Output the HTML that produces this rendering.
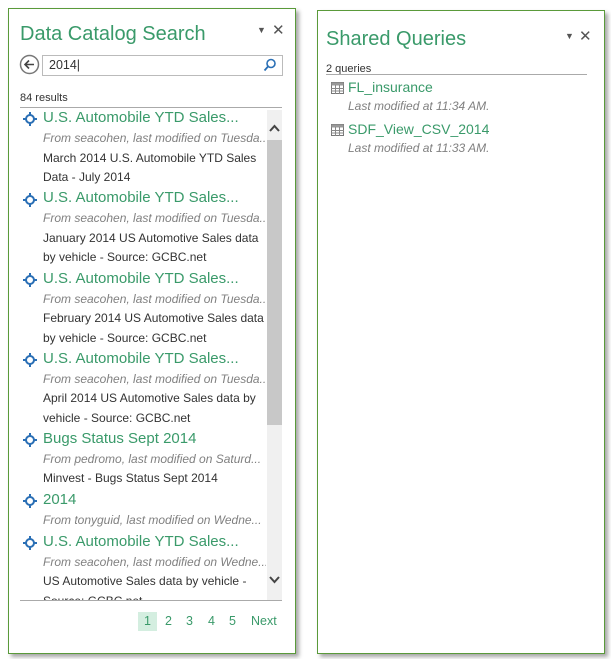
<!DOCTYPE html>
<html><head><meta charset="utf-8"><style>
body{margin:0;width:611px;height:659px;background:#fff;position:relative;overflow:hidden;font-family:"Liberation Sans",sans-serif}
.p{position:absolute;border:1px solid #5a9a3a;box-shadow:3px 3px 4px rgba(0,0,0,.35);background:#fff}
.a{position:absolute;white-space:nowrap}
.t{color:#3a9a6a}
.h{font-size:20px;color:#3a9a6a}
.it{font-style:italic;color:#808080;font-size:12px;margin-top:0px}
.d{color:#333;font-size:12px}
.ti{font-size:15px;color:#3a9a6a;margin-top:-1px}
</style></head><body>
<div class="p" style="left:8px;top:8px;width:286px;height:644px"></div>
<div class="p" style="left:317px;top:10px;width:286px;height:642px"></div>

<div class="a h" style="left:20px;top:23px">Data Catalog Search</div>
<div class="a" style="left:257px;top:25px;font-size:9px;color:#555">▼</div>
<div class="a" style="left:272px;top:21px;font-size:15px;color:#555">✕</div>
<svg class="a" style="left:19px;top:54px" width="21" height="21"><circle cx="10.5" cy="10.5" r="9" fill="none" stroke="#777" stroke-width="1.5"/><path d="M15 10.5H6.5M10 6.5l-4 4 4 4" fill="none" stroke="#444" stroke-width="1.6"/></svg>
<div class="a" style="left:42px;top:55px;width:239px;height:19px;border:1px solid #bbb"></div>
<div class="a d" style="left:49px;top:58px;font-size:12.5px">2014|</div>
<svg class="a" style="left:263px;top:58px" width="14" height="14"><circle cx="8" cy="5.5" r="4" fill="none" stroke="#2a6fb5" stroke-width="1.6"/><line x1="5" y1="8.5" x2="1.5" y2="12.5" stroke="#2a6fb5" stroke-width="1.8"/></svg>
<div class="a d" style="left:20px;top:92px;font-size:11px">84 results</div>
<div class="a" style="left:20px;top:107px;width:262px;height:1px;background:#aaa"></div>
<div class="a" style="left:267px;top:110px;width:15px;height:490px;background:#f0f0f0"></div>
<div class="a" style="left:267px;top:140px;width:15px;height:285px;background:#c8c8c8"></div>
<svg class="a" style="left:268px;top:123px" width="13" height="10"><path d="M2 8l4.5-5 4.5 5" fill="none" stroke="#444" stroke-width="2"/></svg>
<svg class="a" style="left:268px;top:575px" width="13" height="10"><path d="M2 2l4.5 5 4.5-5" fill="none" stroke="#444" stroke-width="2"/></svg>
<div class="a" style="left:20px;top:600px;width:262px;height:1px;background:#aaa"></div>

<div style="position:absolute;left:0;top:0;width:266px;height:600px;overflow:hidden">
<div class="a ti" style="left:43px;top:110px">U.S. Automobile YTD Sales...</div>
<div class="a it" style="left:43px;top:131px">From seacohen, last modified on Tuesda...</div>
<div class="a d" style="left:43px;top:151px">March 2014 U.S. Automobile YTD Sales</div>
<div class="a d" style="left:43px;top:170px">Data - July 2014</div>

<div class="a ti" style="left:43px;top:190px">U.S. Automobile YTD Sales...</div>
<div class="a it" style="left:43px;top:211px">From seacohen, last modified on Tuesda...</div>
<div class="a d" style="left:43px;top:231px">January 2014 US Automotive Sales data</div>
<div class="a d" style="left:43px;top:250px">by vehicle - Source: GCBC.net</div>

<div class="a ti" style="left:43px;top:271px">U.S. Automobile YTD Sales...</div>
<div class="a it" style="left:43px;top:292px">From seacohen, last modified on Tuesda...</div>
<div class="a d" style="left:43px;top:311px">February 2014 US Automotive Sales data</div>
<div class="a d" style="left:43px;top:331px">by vehicle - Source: GCBC.net</div>

<div class="a ti" style="left:43px;top:351px">U.S. Automobile YTD Sales...</div>
<div class="a it" style="left:43px;top:372px">From seacohen, last modified on Tuesda...</div>
<div class="a d" style="left:43px;top:391px">April 2014 US Automotive Sales data by</div>
<div class="a d" style="left:43px;top:411px">vehicle - Source: GCBC.net</div>

<div class="a ti" style="left:43px;top:431px">Bugs Status Sept 2014</div>
<div class="a it" style="left:43px;top:452px">From pedromo, last modified on Saturd...</div>
<div class="a d" style="left:43px;top:471px">Minvest - Bugs Status Sept 2014</div>

<div class="a ti" style="left:43px;top:492px">2014</div>
<div class="a it" style="left:43px;top:513px">From tonyguid, last modified on Wedne...</div>

<div class="a ti" style="left:43px;top:534px">U.S. Automobile YTD Sales...</div>
<div class="a it" style="left:43px;top:555px">From seacohen, last modified on Wedne...</div>
<div class="a d" style="left:43px;top:574px">US Automotive Sales data by vehicle -</div>
<div class="a d" style="left:43px;top:594px">Source: GCBC.net</div>
</div>
<svg width="0" height="0" style="position:absolute"><defs><g id="ic"><circle cx="8" cy="8" r="4" fill="none" stroke="#2a6fb5" stroke-width="2"/><path d="M8 1v4M8 11v4M1 8h4M11 8h4" stroke="#2a6fb5" stroke-width="2"/></g></defs></svg>
<svg class="a" style="left:22px;top:111px" width="16" height="16"><use href="#ic"/></svg>
<svg class="a" style="left:22px;top:192px" width="16" height="16"><use href="#ic"/></svg>
<svg class="a" style="left:22px;top:272px" width="16" height="16"><use href="#ic"/></svg>
<svg class="a" style="left:22px;top:352px" width="16" height="16"><use href="#ic"/></svg>
<svg class="a" style="left:22px;top:432px" width="16" height="16"><use href="#ic"/></svg>
<svg class="a" style="left:22px;top:493px" width="16" height="16"><use href="#ic"/></svg>
<svg class="a" style="left:22px;top:535px" width="16" height="16"><use href="#ic"/></svg>

<div class="a" style="left:138px;top:612px;width:19px;height:19px;background:#d4eee0"></div>
<div class="a t" style="left:144px;top:614px;font-size:12.5px">1</div>
<div class="a t" style="left:165px;top:614px;font-size:12.5px">2</div>
<div class="a t" style="left:186px;top:614px;font-size:12.5px">3</div>
<div class="a t" style="left:208px;top:614px;font-size:12.5px">4</div>
<div class="a t" style="left:229px;top:614px;font-size:12.5px">5</div>
<div class="a t" style="left:251px;top:614px;font-size:12.5px">Next</div>

<div class="a h" style="left:326px;top:28px">Shared Queries</div>
<div class="a" style="left:565px;top:31px;font-size:9px;color:#555">▼</div>
<div class="a" style="left:579px;top:27px;font-size:15px;color:#555">✕</div>
<div class="a d" style="left:326px;top:63px;font-size:11px">2 queries</div>
<div class="a" style="left:326px;top:74px;width:261px;height:1px;background:#aaa"></div>
<svg class="a" style="left:331px;top:82px" width="13" height="12"><rect x=".5" y=".5" width="12" height="11" fill="#fff" stroke="#777"/><rect x=".5" y=".5" width="12" height="3" fill="#999"/><path d="M4.5 3v9M8.5 3v9M0 6.5h13M0 9h13" stroke="#888"/></svg>
<div class="a ti" style="left:348px;top:80px;font-size:14px">FL_insurance</div>
<div class="a it" style="left:348px;top:99px">Last modified at 11:34 AM.</div>
<svg class="a" style="left:331px;top:124px" width="13" height="12"><rect x=".5" y=".5" width="12" height="11" fill="#fff" stroke="#777"/><rect x=".5" y=".5" width="12" height="3" fill="#999"/><path d="M4.5 3v9M8.5 3v9M0 6.5h13M0 9h13" stroke="#888"/></svg>
<div class="a ti" style="left:348px;top:122px;font-size:14px">SDF_View_CSV_2014</div>
<div class="a it" style="left:348px;top:141px">Last modified at 11:33 AM.</div>
</body></html>
